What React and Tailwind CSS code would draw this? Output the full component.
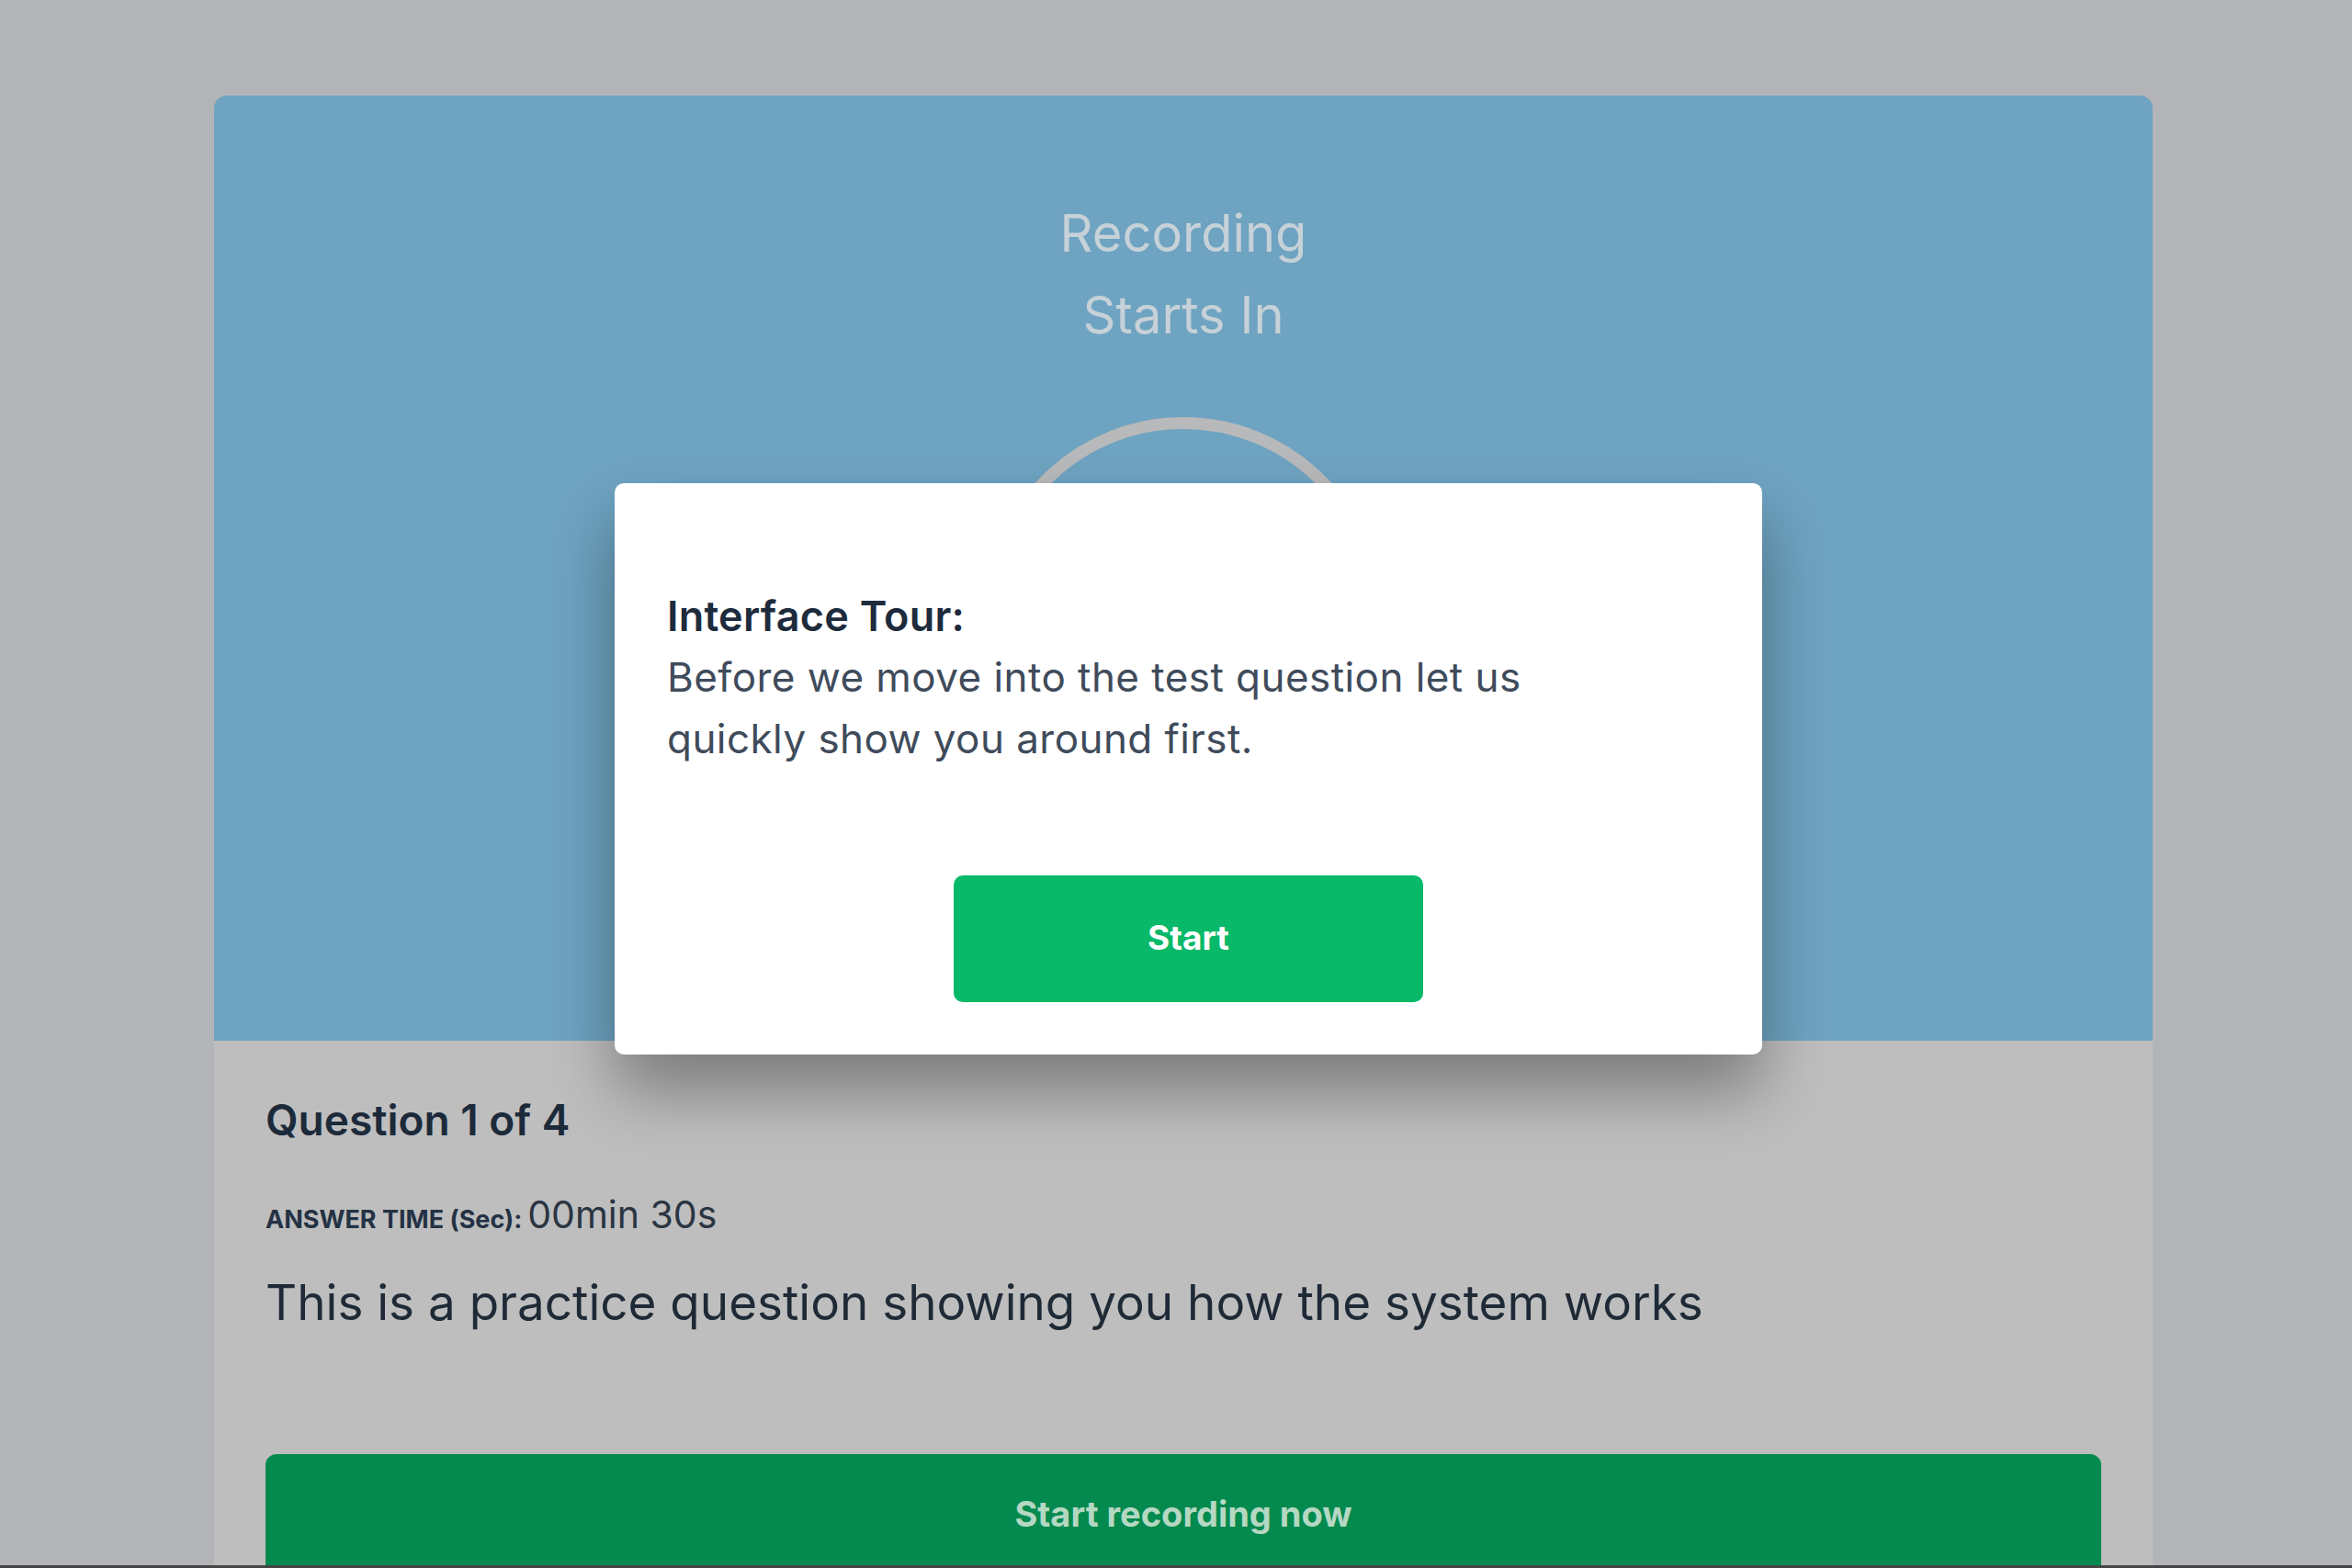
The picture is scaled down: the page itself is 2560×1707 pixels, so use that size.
import React from 'react';

const font = { fontFamily: 'Inter, "Noto Sans", sans-serif' };

const TourModal = () => {
  return (
    <div className="absolute left-[669px] top-[526px] w-[1249px] h-[622px] bg-white rounded-[10px] shadow-[0_40px_70px_rgba(0,0,0,0.35)] px-[57px] pt-[112px]">
      <h3 className="text-[45px] leading-[66px] font-semibold text-[#1d2b3c] tracking-[0.005em]">Interface Tour:</h3>
      <p className="text-[44px] leading-[67px] text-[#3f4b5b] max-w-[1010px] tracking-[0.01em]">
        Before we move into the test question let us quickly show you around first.
      </p>
      <div className="flex justify-center mt-[115px]">
        <button className="w-[511px] h-[138px] rounded-[10px] bg-[#07b968] text-white text-[37px] font-bold pb-[3px]">
          Start
        </button>
      </div>
    </div>
  );
};

const App = () => {
  return (
    <div className="relative w-[2560px] h-[1707px] overflow-hidden bg-[#b3b4b7]" style={font}>
      <div className="pt-[104px] px-[233px] h-[1704px]">
        <section className="w-[2110px] h-full rounded-t-[14px] overflow-hidden bg-[#bebebe] flex flex-col">
          <div className="h-[1029px] shrink-0 bg-[#6ea3c1] flex flex-col items-center pt-[106px]">
            <p className="text-[56px] leading-[89px] text-[#c6d1d8]">Recording</p>
            <p className="text-[56px] leading-[89px] text-[#c6d1d8]">Starts In</p>
            <div className="mt-[66px] w-[434px] h-[434px] shrink-0 rounded-full border-[13px] border-[#b8b9ba]" />
          </div>
          <div className="px-[56px] pt-[53px] flex flex-col shrink-0">
            <h2 className="text-[46px] leading-[66px] font-semibold text-[#1c2a3a]">Question 1 of 4</h2>
            <div className="mt-[46px] flex items-baseline gap-[6px] leading-[48px]">
              <span className="text-[27px] font-bold uppercase text-[#243244]">Answer time <span className="normal-case">(Sec)</span>:</span>
              <span className="text-[41px] text-[#2a3542]">00min 30s</span>
            </div>
            <p className="mt-[27px] text-[53px] leading-[78px] text-[#1f2a37]">
              This is a practice question showing you how the system works
            </p>
            <div className="mt-[126px] h-[130px] rounded-t-[12px] bg-[#048a4e] flex items-center justify-center">
              <span className="text-[38px] font-bold text-[#b5d8c3]">Start recording now</span>
            </div>
          </div>
        </section>
      </div>
      <div className="h-[3px] bg-[#454545]" />
      <TourModal />
    </div>
  );
};

export default App;
